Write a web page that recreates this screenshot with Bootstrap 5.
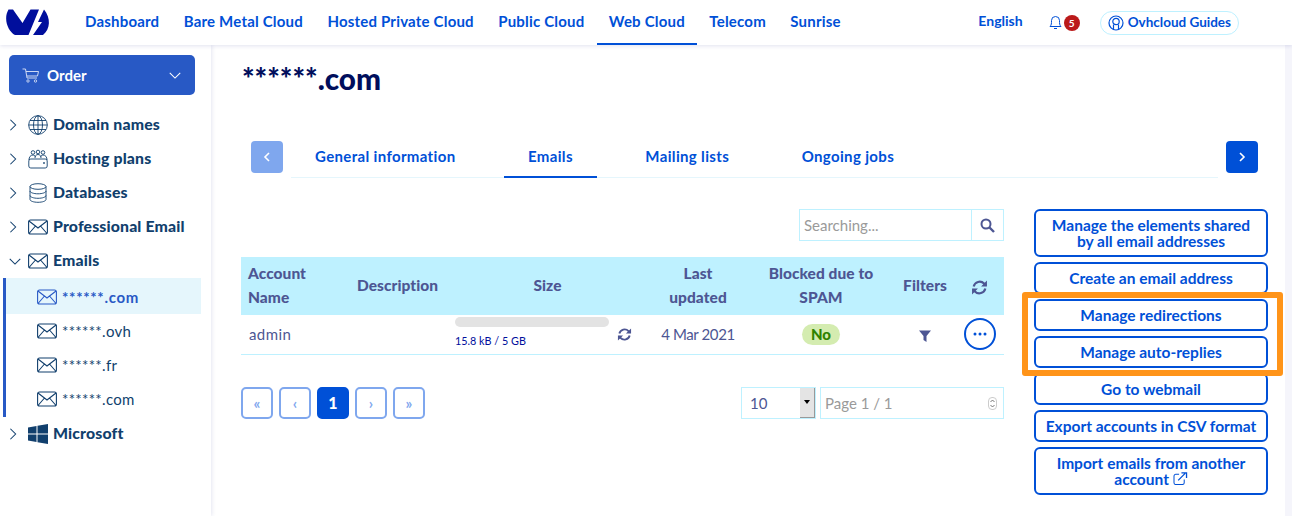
<!DOCTYPE html>
<html lang="en">
<head>
    <meta charset="UTF-8">
    <title>Emails</title>
    <link href="https://cdn.jsdelivr.net/npm/bootstrap@5.3.0/dist/css/bootstrap.min.css" rel="stylesheet">
    <script src="https://cdn.jsdelivr.net/npm/bootstrap@5.3.0/dist/js/bootstrap.bundle.min.js"></script>
    <style>
        body {
            font-family: "Lato", "Liberation Sans", sans-serif;
            font-size: 15px;
            background: #f5f5fb;
            color: #4d5693;
            height: 516px;
            overflow: hidden;
        }
        a { text-decoration: none; }
        .top-bar {
            height: 45px;
            background: #fff;
            box-shadow: 0 1px 4px rgba(40, 50, 140, .14);
            position: relative;
            z-index: 2;
        }
        .logo-link { width: 72.8px; padding-left: 5px; }
        .top-link {
            color: #0050d7;
            font-weight: 700;
            padding: 0 12.2px;
            height: 45px;
            line-height: 42px;
            white-space: nowrap;
            font-size: 15px;
            letter-spacing: .2px;
        }
        .top-link.on { border-bottom: 2px solid #0050d7; }
        .lang-link { font-size: 14px; letter-spacing: 0; padding: 0 12px; }
        .bell-icon { margin-left: 14px; margin-top: -2px; }
        .bell-count {
            width: 16px; height: 16px; border-radius: 50%; margin-left: 2px;
            background: #bb1a1a; color: #fff;
            font-size: 10px; font-weight: 700; line-height: 16px; text-align: center;
        }
        .guides-pill {
            height: 24px; padding: 0 7px; margin-left: 20px; margin-right: 53px;
            border: 1px solid #bef1ff; border-radius: 12px;
            color: #0050d7; font-weight: 700; font-size: 13.5px;
        }
        .side-col {
            width: 211px; flex: none; height: 471px;
            background: #fff; padding-top: 10px;
            box-shadow: 1px 0 4px rgba(40, 50, 140, .12);
            position: relative; z-index: 1;
        }
        .order-btn {
            margin: 0 16px 13px 9px; height: 40px;
            background: #2859c5; border-radius: 5px; color: #fff;
            font-weight: 700; padding: 0 13px;
        }
        .side-row {
            height: 34px; color: #113f6d; font-weight: 900; font-size: 15.8px;
            padding-left: 8px; letter-spacing: .15px;
        }
        .side-row .chev { width: 20px; }
        .side-row .ico { width: 25px; }
        .side-txt { margin-top: -2px; }
        .sub-list { margin-left: 3px; border-left: 3px solid #2859c5; width: 198px; padding-bottom: 1px; }
        .sub-row {
            height: 34px; padding-left: 31px; color: #113f6d; font-size: 15px; letter-spacing: .3px;
        }
        .sub-row.on { background: #e5f6fc; color: #2859c5; font-weight: 700; height: 36px; padding-top: 2px; letter-spacing: .7px; }
        .sub-row svg { margin-right: 5px; }
        .main-col {
            width: 1074px; flex: none; height: 471px; background: #fff;
            padding-left: 30px;
        }
        .dom-title {
            font-size: 29.7px; font-weight: 900; color: #000e5c;
            margin: 19px 0 0 1px; line-height: 30px; height: 77px;
        }
        .tab-row { margin-left: 10px; width: 1007px; height: 37px; }
        .tab-arrow {
            width: 32px; height: 32px; border-radius: 4px; flex: none;
            background: #0050d7; color: #fff; border: 0; padding: 0;
        }
        .tab-arrow.off { background: #7fa7ee; }
        .tab-line {
            margin: 0 8px; height: 37px; flex: 1;
            border-bottom: 1px solid #e5f6fc;
        }
        .tab-item {
            color: #0050d7; font-weight: 700; padding: 0 24px; margin-right: 24.5px; height: 37px;
            line-height: 30px; white-space: nowrap; letter-spacing: .35px;
        }
        .tab-item.on { border-bottom: 2px solid #0050d7; }
        .content-row { margin-top: 31px; }
        .left-col { width: 763px; flex: none; }
        .search-box {
            width: 205px; height: 32px; border: 1px solid #bef1ff; margin: 0 0 16px auto;
        }
        .search-box input {
            width: 172px; border: 0; border-right: 1px solid #bef1ff;
            padding: 0 4px; font-size: 15px; outline: 0;
        }
        input::placeholder { color: #9a9a9a; opacity: 1; }
        .search-box span { flex: 1; }
        .mail-table { width: 763px; table-layout: fixed; margin: 0; }
        .mail-table th {
            background: #bef1ff; color: #4d5693; font-weight: 900; font-size: 15.5px;
            line-height: 24px; padding: 4px 7px 6px; height: 58px; text-align: center;
            vertical-align: middle; border: 0; letter-spacing: .05px;
        }
        .mail-table td {
            color: #4d5693; padding: 0 7px; height: 39px; text-align: center;
            vertical-align: middle; border-bottom: 1px solid #bef1ff; font-size: 15px;
        }
        .mail-table .first-cell { text-align: left; }
        .mail-table td.first-cell { letter-spacing: .4px; padding-left: 8px; }
        .mail-table td.date-cell { letter-spacing: -.4px; }
        .mail-table td.size-cell { padding: 0 0 0 10px; }
        .mail-table td.dots-cell { padding: 0 0 0 1px; }
        .quota-bar { width: 154px; height: 10px; border-radius: 5px; background: #e3e3e3; margin-top: -4px; }
        .quota-text { font-size: 10.8px; color: #000e9c; line-height: 14px; margin-top: 7px; text-align: left; }
        .quota-sync { margin-left: 8px; }
        .no-pill {
            display: inline-block; background: #d4ecb0; color: #2f8200; font-weight: 900;
            border-radius: 11px; padding: 0 9px; line-height: 21px; font-size: 15px;
        }
        .dots-btn {
            width: 32px; height: 32px; border-radius: 50%; border: 2px solid #0050d7;
            background: #fff; padding: 0; display: inline-flex; align-items: center; justify-content: center;
        }
        .pager-row { margin-top: 32px; }
        .pg-list { gap: 6px; }
        .pg-btn {
            width: 32px; height: 32px; border: 2px solid #7fa7ee; border-radius: 5px;
            color: #7fa7ee; background: #fff; font-weight: 700; padding: 0; font-size: 15px; line-height: 26px;
        }
        .pg-btn.on { background: #0050d7; border-color: #0050d7; color: #fff; font-size: 16px; font-weight: 900; }
        .size-wrap { width: 75px; height: 32px; border: 1px solid #bef1ff; position: relative; margin-right: 4px; }
        .size-wrap select {
            width: 100%; height: 100%; border: 0; appearance: none; background: #fff;
            color: #4d5693; padding: 2px 0 0 8px; font-size: 15px; outline: 0;
        }
        .size-arrow {
            position: absolute; top: 0; right: 0; width: 15px; height: 30px;
            background: #e4e4e4; border-right: 1px solid #999; border-bottom: 1px solid #999;
            pointer-events: none; display: flex; align-items: center; justify-content: center;
        }
        .size-arrow::after {
            content: ""; border-left: 3px solid transparent; border-right: 3px solid transparent;
            border-top: 4px solid #000;
        }
        .page-wrap { width: 184px; height: 32px; border: 1px solid #bef1ff; position: relative; }
        .page-input { width: 100%; height: 100%; border: 0; padding: 0 4px; font-size: 15px; outline: 0; }
        .page-spin {
            position: absolute; top: 9px; right: 6px; width: 9px; height: 13px;
            border: 1px solid #ccc; border-radius: 4px; background: #fff;
            display: flex; align-items: center; justify-content: center;
        }
        .right-col { width: 234px; margin-left: 30px; flex: none; gap: 5px; }
        .act-btn {
            border: 2px solid #0050d7; border-radius: 6px; background: #fff; color: #0050d7;
            font-weight: 700; font-size: 15.5px; line-height: 16px; padding: 6px 4px; min-height: 32px;
            text-align: center;
        }
        .act-btn.pad-wide { padding-left: 10px; padding-right: 10px; }
        .act-btn svg { vertical-align: 0; }
        .mark-box {
            position: absolute; left: 1022px; top: 292px; width: 261px; height: 84px;
            border: 6px solid #ff9419; border-radius: 3px; pointer-events: none; z-index: 3;
        }
    </style>
</head>
<body>
    <svg class="d-none">
        <symbol id="i-right" viewBox="0 0 10 16"><path d="M2 2l6 6-6 6" fill="none" stroke="currentColor" stroke-width="1.2"/></symbol>
        <symbol id="i-down" viewBox="0 0 16 10"><path d="M2 2l6 6 6-6" fill="none" stroke="currentColor" stroke-width="1.2"/></symbol>
        <symbol id="i-mail" viewBox="0 0 20 16"><rect x=".6" y="1" width="18.8" height="14" rx="2" fill="none" stroke="currentColor" stroke-width="1.1"/><path d="M1 2l9 7 9-7M1 14.500l6.500-7.500M19 14.500l-6.500-7.500" fill="none" stroke="currentColor" stroke-width="1.1"/></symbol>
        <symbol id="i-sync" viewBox="0 0 16 16"><path d="M2.500 7a5.800 5.800 0 0 1 9.800-2.700L14 6M13.500 9a5.800 5.800 0 0 1-9.800 2.700L2 10" fill="none" stroke="currentColor" stroke-width="2"/><path d="M15 1.500V7H9.500zM1 14.500V9h5.500z" fill="currentColor"/></symbol>
    </svg>

    <nav class="top-bar d-flex align-items-center">
        <a class="logo-link d-block" href="#">
            <svg width="46" height="28" viewBox="0 0 46 28" class="d-block">
                <path d="M3.500 .5 8 .5 17.500 14 25.500 .5 34 .5 23.500 26 10 26C3 22 -2 10 3.500 .5Z" fill="#000e9c"/>
                <path d="M39 .5 33 13 37 13 28 26 38 26C45.500 20 46 9 39 .5Z" fill="#000e9c"/>
            </svg>
        </a>
        <a class="top-link" href="#">Dashboard</a>
        <a class="top-link" href="#">Bare Metal Cloud</a>
        <a class="top-link" href="#">Hosted Private Cloud</a>
        <a class="top-link" href="#">Public Cloud</a>
        <a class="top-link on" href="#">Web Cloud</a>
        <a class="top-link" href="#">Telecom</a>
        <a class="top-link" href="#">Sunrise</a>
        <div class="ms-auto d-flex align-items-center">
            <a class="top-link lang-link" href="#">English</a>
            <svg class="bell-icon" width="13" height="16" viewBox="0 0 13 16"><path d="M1 12.500c1.500-1.500 1.500-3 1.500-6a4 4 0 0 1 8 0c0 3 0 4.500 1.500 6zM5 14.500h3" fill="none" stroke="#0050d7"/></svg>
            <span class="bell-count">5</span>
            <a class="guides-pill d-flex align-items-center gap-1" href="#">
                <svg width="16" height="16" viewBox="0 0 16 16"><circle cx="8" cy="8" r="7" fill="none" stroke="#0050d7" stroke-width="1.200"/><circle cx="8" cy="6.500" r="3.200" fill="none" stroke="#0050d7" stroke-width="1.200"/><path d="M5.500 14V9.500M10.500 14V9.500" stroke="#0050d7" stroke-width="1.200"/></svg>
                Ovhcloud Guides
            </a>
        </div>
    </nav>

    <div class="d-flex">
        <aside class="side-col">
            <div class="order-btn d-flex align-items-center">
                <svg class="me-2" width="17" height="15" viewBox="0 0 17 15"><path d="M.500 1H3.500L5 10H15M4 3.500H16.500L15.500 8H5" fill="none" stroke="#dfe7f8" stroke-width=".9"/><circle cx="6" cy="13" r="1.200" fill="none" stroke="#dfe7f8" stroke-width=".8"/><circle cx="13.500" cy="13" r="1.200" fill="none" stroke="#dfe7f8" stroke-width=".8"/></svg>
                Order
                <svg class="ms-auto text-white" width="14" height="9"><use href="#i-down"/></svg>
            </div>
            <div class="side-row d-flex align-items-center">
                <span class="chev"><svg width="10" height="14" class="d-block"><use href="#i-right"/></svg></span>
                <span class="ico"><svg width="20" height="20" viewBox="0 0 20 20" class="d-block" fill="none" stroke="currentColor" stroke-width=".9"><circle cx="10" cy="10" r="9.300"/><ellipse cx="10" cy="10" rx="4.500" ry="9.300"/><path d="M10 .7V19.300M.7 10H19.300M2 5.500H18M2 14.500H18"/></svg></span>
                <span class="side-txt">Domain names</span>
            </div>
            <div class="side-row d-flex align-items-center">
                <span class="chev"><svg width="10" height="14" class="d-block"><use href="#i-right"/></svg></span>
                <span class="ico"><svg width="20" height="20" viewBox="0 0 20 20" class="d-block" fill="none" stroke="currentColor" stroke-width=".9"><circle cx="5" cy="3.500" r="1.800"/><circle cx="10" cy="3" r="1.800"/><circle cx="15" cy="3.500" r="1.800"/><path d="M1 11c0-3 1.500-5 4-5 1.500 0 2 1 2.500 2M19 11c0-3-1.500-5-4-5-1.500 0-2 1-2.500 2M7 9c0-2 1-3.500 3-3.500S13 7 13 9"/><rect x=".8" y="10" width="18.400" height="9" rx="2"/><circle cx="16" cy="14" r=".6"/></svg></span>
                <span class="side-txt">Hosting plans</span>
            </div>
            <div class="side-row d-flex align-items-center">
                <span class="chev"><svg width="10" height="14" class="d-block"><use href="#i-right"/></svg></span>
                <span class="ico"><svg width="20" height="20" viewBox="0 0 20 20" class="d-block" fill="none" stroke="currentColor" stroke-width=".9"><ellipse cx="10" cy="3.500" rx="8" ry="2.800"/><path d="M2 3.500V16.500C2 18 5.500 19.300 10 19.300S18 18 18 16.500V3.500M2 8c0 1.500 3.500 2.800 8 2.800S18 9.500 18 8M2 12.500c0 1.500 3.500 2.800 8 2.800S18 14 18 12.500"/></svg></span>
                <span class="side-txt">Databases</span>
            </div>
            <div class="side-row d-flex align-items-center">
                <span class="chev"><svg width="10" height="14" class="d-block"><use href="#i-right"/></svg></span>
                <span class="ico"><svg width="20" height="16" class="d-block"><use href="#i-mail"/></svg></span>
                <span class="side-txt">Professional Email</span>
            </div>
            <div class="side-row d-flex align-items-center">
                <span class="chev"><svg width="14" height="9" class="d-block"><use href="#i-down"/></svg></span>
                <span class="ico"><svg width="20" height="16" class="d-block"><use href="#i-mail"/></svg></span>
                <span class="side-txt">Emails</span>
            </div>
            <div class="sub-list">
                <div class="sub-row on d-flex align-items-center"><svg width="20" height="16"><use href="#i-mail"/></svg>******.com</div>
                <div class="sub-row d-flex align-items-center"><svg width="20" height="16"><use href="#i-mail"/></svg>******.ovh</div>
                <div class="sub-row d-flex align-items-center"><svg width="20" height="16"><use href="#i-mail"/></svg>******.fr</div>
                <div class="sub-row d-flex align-items-center"><svg width="20" height="16"><use href="#i-mail"/></svg>******.com</div>
            </div>
            <div class="side-row d-flex align-items-center">
                <span class="chev"><svg width="10" height="14" class="d-block"><use href="#i-right"/></svg></span>
                <span class="ico"><svg width="20" height="20" viewBox="0 0 20 20" class="d-block"><path d="M0 3.500 8.500 2V9.500H0zM9.500 1.800 20 0V9.500H9.500zM0 10.500H8.500V18L0 16.500zM9.500 10.500H20V20L9.500 18.200z" fill="currentColor"/></svg></span>
                <span class="side-txt">Microsoft</span>
            </div>
        </aside>

        <main class="main-col">
            <h1 class="dom-title">******.com</h1>
            <div class="tab-row d-flex">
                <button class="tab-arrow off"><svg width="8" height="12" viewBox="0 0 8 12" class="d-block mx-auto"><path d="M6 2 2 6l4 4" fill="none" stroke="#fff" stroke-width="1.600"/></svg></button>
                <div class="tab-line d-flex">
                    <a class="tab-item" href="#">General information</a>
                    <a class="tab-item on" href="#">Emails</a>
                    <a class="tab-item" href="#">Mailing lists</a>
                    <a class="tab-item" href="#">Ongoing jobs</a>
                </div>
                <button class="tab-arrow"><svg width="8" height="12" viewBox="0 0 8 12" class="d-block mx-auto"><path d="M2 2l4 4-4 4" fill="none" stroke="#fff" stroke-width="1.600"/></svg></button>
            </div>

            <div class="content-row d-flex align-items-start">
                <div class="left-col">
                    <div class="search-box d-flex">
                        <input type="text" placeholder="Searching...">
                        <span class="d-flex align-items-center justify-content-center">
                            <svg width="15" height="15" viewBox="0 0 15 15"><circle cx="6" cy="6" r="4.500" fill="none" stroke="#4d5693" stroke-width="2"/><path d="M9.500 9.500 14 14" stroke="#4d5693" stroke-width="2.400"/></svg>
                        </span>
                    </div>
                    <table class="table mail-table">
                        <colgroup>
                            <col style="width:109px"><col style="width:95px"><col style="width:205px"><col style="width:96px"><col style="width:150px"><col style="width:58px"><col style="width:50px">
                        </colgroup>
                        <thead>
                            <tr>
                                <th class="first-cell">Account Name</th>
                                <th>Description</th>
                                <th>Size</th>
                                <th>Last updated</th>
                                <th>Blocked due to SPAM</th>
                                <th>Filters</th>
                                <th><svg width="17" height="17"><use href="#i-sync"/></svg></th>
                            </tr>
                        </thead>
                        <tbody>
                            <tr>
                                <td class="first-cell">admin</td>
                                <td></td>
                                <td class="size-cell">
                                    <div class="d-flex align-items-center">
                                        <div>
                                            <div class="quota-bar"></div>
                                            <div class="quota-text">15.8 kB / 5 GB</div>
                                        </div>
                                        <svg class="quota-sync" width="15" height="15"><use href="#i-sync"/></svg>
                                    </div>
                                </td>
                                <td class="date-cell">4 Mar 2021</td>
                                <td><span class="no-pill">No</span></td>
                                <td><svg width="12" height="12" viewBox="0 0 12 12"><path d="M0 .5H12L7.500 6V12L4.500 10V6z" fill="#4d5693"/></svg></td>
                                <td class="dots-cell"><button class="dots-btn"><svg width="14" height="4" viewBox="0 0 14 4" class="d-block"><circle cx="2" cy="2" r="1.500" fill="#0050d7"/><circle cx="7" cy="2" r="1.500" fill="#0050d7"/><circle cx="12" cy="2" r="1.500" fill="#0050d7"/></svg></button></td>
                            </tr>
                        </tbody>
                    </table>
                    <div class="pager-row d-flex align-items-center">
                        <div class="pg-list d-flex flex-grow-1">
                            <button class="pg-btn">«</button>
                            <button class="pg-btn">‹</button>
                            <button class="pg-btn on">1</button>
                            <button class="pg-btn">›</button>
                            <button class="pg-btn">»</button>
                        </div>
                        <div class="size-wrap">
                            <select><option>10</option></select>
                            <span class="size-arrow"></span>
                        </div>
                        <div class="page-wrap">
                            <input class="page-input" type="text" placeholder="Page 1 / 1">
                            <span class="page-spin"><svg width="5" height="9" viewBox="0 0 5 9" class="d-block"><path d="M.5 3 2.500 1l2 2M.5 6l2 2 2-2" fill="none" stroke="#555" stroke-width=".8"/></svg></span>
                        </div>
                    </div>
                </div>

                <div class="right-col d-grid">
                    <button class="act-btn pad-wide">Manage the elements shared by all email addresses</button>
                    <button class="act-btn">Create an email address</button>
                    <button class="act-btn">Manage redirections</button>
                    <button class="act-btn">Manage auto-replies</button>
                    <button class="act-btn">Go to webmail</button>
                    <button class="act-btn">Export accounts in CSV format</button>
                    <button class="act-btn pad-wide">Import emails from another account
                        <svg width="15" height="13" viewBox="0 0 15 14"><path d="M11.500 8v3.500a2 2 0 0 1-2 2h-7a2 2 0 0 1-2-2v-7a2 2 0 0 1 2-2H6" fill="none" stroke="#0050d7" stroke-width="1.100"/><path d="M5 9 12.500 1.500M8.500 1H14V6.500" fill="none" stroke="#0050d7" stroke-width="1.400"/></svg>
                    </button>
                </div>
            </div>
        </main>
    </div>
    <div class="mark-box"></div>
</body>
</html>
